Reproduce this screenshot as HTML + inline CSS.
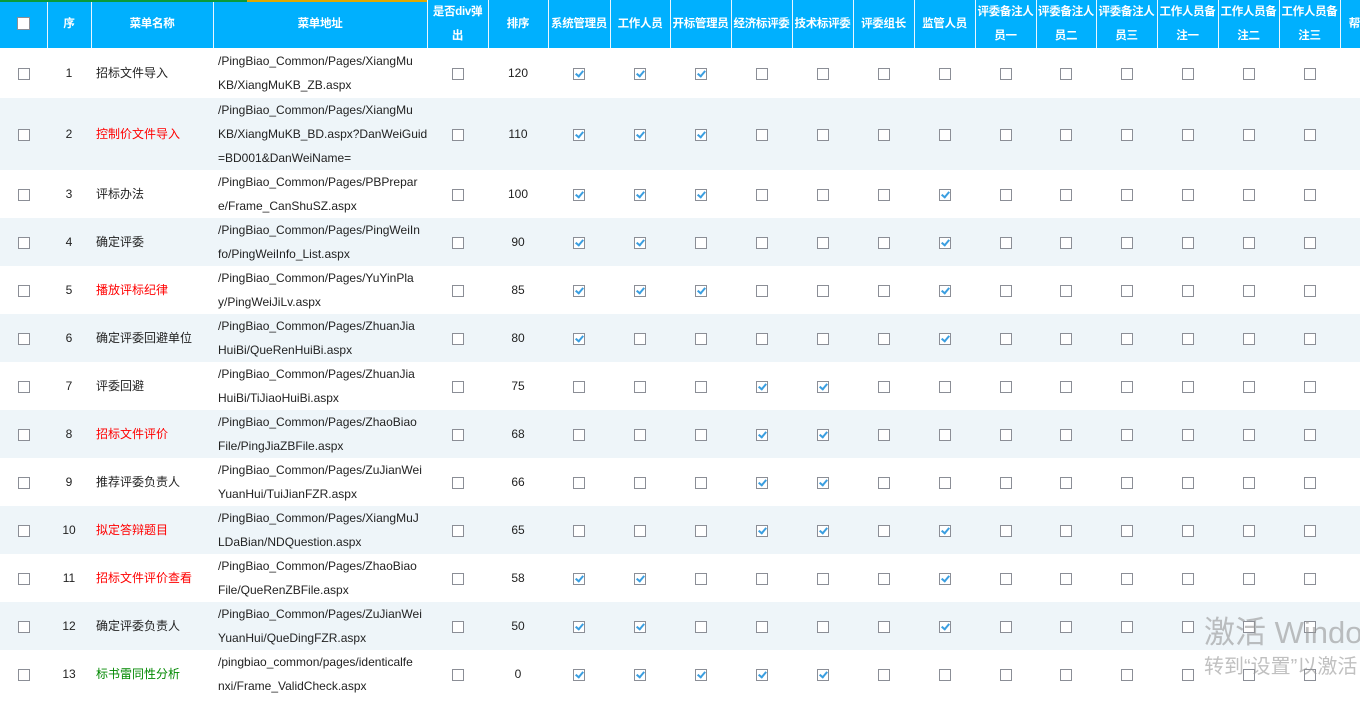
<!DOCTYPE html>
<html><head><meta charset="utf-8"><style>
body{margin:0;width:1360px;height:723px;overflow:hidden;background:#fff;font-family:"Liberation Sans","Noto Sans CJK SC",sans-serif;font-size:12px;color:#222;position:relative}
.top{position:absolute;top:0;left:0;height:2px;width:1360px}
table{border-collapse:collapse;table-layout:fixed;position:absolute;top:0;left:0;width:1380px}
th{background:#00b0fe;color:#fff;font-weight:bold;height:48px;padding:0;border-right:1px solid #e8f6ff;line-height:24px;font-size:11.5px;text-align:center;overflow:hidden;white-space:nowrap;letter-spacing:-0.3px}
td{padding:0;text-align:center;line-height:24px;vertical-align:middle}
tr.a td{background:#eef5f9}
td.n{text-align:left;padding-left:5px}
td.u{text-align:left;padding-left:5px;white-space:nowrap;overflow:hidden}
.cb{display:inline-block;width:10px;height:10px;border:1px solid #8b8e96;background:#fff;vertical-align:middle;position:relative}
.ck::after{content:"";position:absolute;left:3px;top:0px;width:3px;height:6px;border:solid #3a9ee0;border-width:0 2px 2px 0;transform:rotate(40deg)}
.r{color:#f00}.g{color:#080}
.wm1{position:absolute;left:1204px;top:607px;font-size:31px;color:rgba(150,150,150,.6);white-space:nowrap}
.wm2{position:absolute;left:1204px;top:650px;font-size:20px;color:rgba(150,150,150,.6);white-space:nowrap}
</style></head><body>
<table>
<colgroup><col style="width:47px"><col style="width:44px"><col style="width:122px"><col style="width:214px"><col style="width:61px"><col style="width:60px"><col style="width:62px"><col style="width:60px"><col style="width:61px"><col style="width:61px"><col style="width:61px"><col style="width:61px"><col style="width:61px"><col style="width:61px"><col style="width:60px"><col style="width:61px"><col style="width:61px"><col style="width:61px"><col style="width:61px"><col style="width:40px"></colgroup>
<tr><th><span class="cb" style="width:11px;height:11px"></span></th><th>序</th><th>菜单名称</th><th>菜单地址</th><th>是否div弹<br>出</th><th>排序</th><th>系统管理员</th><th>工作人员</th><th>开标管理员</th><th>经济标评委</th><th>技术标评委</th><th>评委组长</th><th>监管人员</th><th>评委备注人<br>员一</th><th>评委备注人<br>员二</th><th>评委备注人<br>员三</th><th>工作人员备<br>注一</th><th>工作人员备<br>注二</th><th>工作人员备<br>注三</th><th>帮助</th></tr>
<tbody id="b"></tbody>
</table>
<div class="top" style="background:#0a9a3a;width:247px"></div>
<div class="top" style="background:#e0a800;left:247px;width:180px"></div>
<div class="wm1">激活 Windows</div>
<div class="wm2">转到“设置”以激活</div>
<script>
var rows=[
["招标文件导入","","/PingBiao_Common/Pages/XiangMu<br>KB/XiangMuKB_ZB.aspx",120,"1110000",50],
["控制价文件导入","r","/PingBiao_Common/Pages/XiangMu<br>KB/XiangMuKB_BD.aspx?DanWeiGuid<br>=BD001&amp;DanWeiName=",110,"1110000",72],
["评标办法","","/PingBiao_Common/Pages/PBPrepar<br>e/Frame_CanShuSZ.aspx",100,"1110001",48],
["确定评委","","/PingBiao_Common/Pages/PingWeiIn<br>fo/PingWeiInfo_List.aspx",90,"1100001",48],
["播放评标纪律","r","/PingBiao_Common/Pages/YuYinPla<br>y/PingWeiJiLv.aspx",85,"1110001",48],
["确定评委回避单位","","/PingBiao_Common/Pages/ZhuanJia<br>HuiBi/QueRenHuiBi.aspx",80,"1000001",48],
["评委回避","","/PingBiao_Common/Pages/ZhuanJia<br>HuiBi/TiJiaoHuiBi.aspx",75,"0001100",48],
["招标文件评价","r","/PingBiao_Common/Pages/ZhaoBiao<br>File/PingJiaZBFile.aspx",68,"0001100",48],
["推荐评委负责人","","/PingBiao_Common/Pages/ZuJianWei<br>YuanHui/TuiJianFZR.aspx",66,"0001100",48],
["拟定答辩题目","r","/PingBiao_Common/Pages/XiangMuJ<br>LDaBian/NDQuestion.aspx",65,"0001101",48],
["招标文件评价查看","r","/PingBiao_Common/Pages/ZhaoBiao<br>File/QueRenZBFile.aspx",58,"1100001",48],
["确定评委负责人","","/PingBiao_Common/Pages/ZuJianWei<br>YuanHui/QueDingFZR.aspx",50,"1100001",48],
["标书雷同性分析","g","/pingbiao_common/pages/identicalfe<br>nxi/Frame_ValidCheck.aspx",0,"1111100",48]];
var h="";
rows.forEach(function(r,i){
 h+='<tr class="'+(i%2?'a':'')+'" style="height:'+r[5]+'px"><td><span class="cb"></span></td><td>'+(i+1)+'</td><td class="n '+r[1]+'">'+r[0]+'</td><td class="u">'+r[2]+'</td><td><span class="cb"></span></td><td>'+r[3]+'</td>';
 for(var k=0;k<13;k++){var c=k<7&&r[4][k]=="1";h+='<td><span class="cb'+(c?' ck':'')+'"></span></td>';}
 h+='<td></td></tr>';
});
document.getElementById("b").innerHTML=h;
</script>
</body></html>
